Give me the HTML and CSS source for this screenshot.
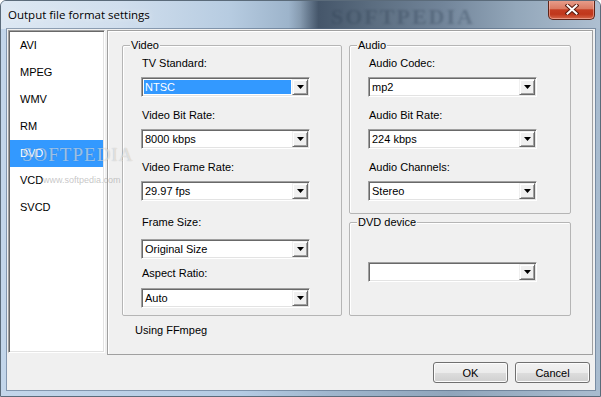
FILE: index.html
```html
<!DOCTYPE html>
<html lang="en">
<head>
    <meta charset="UTF-8">
    <meta name="viewport" content="width=device-width, initial-scale=1.0">
    <title>Output file format settings</title>
    <link rel="stylesheet" href="styles.css">
</head>
<body>
    <div class="window">
        <div class="titlebar">
            <span class="title">Output file format settings</span>
            <span class="title-mark">SOFTPEDIA</span>
            <button class="close-btn" aria-label="Close">
                <svg width="14" height="11" viewBox="0 0 14 11">
                    <path d="M2.5 1.5 L11.5 9.5 M11.5 1.5 L2.5 9.5" stroke="#5a1c10" stroke-width="4" stroke-linecap="square"/>
                    <path d="M2.5 1.5 L11.5 9.5 M11.5 1.5 L2.5 9.5" stroke="#ffffff" stroke-width="2" stroke-linecap="square"/>
                </svg>
            </button>
        </div>

        <div class="client">
            <div class="main">
                <ul class="format-list">
                    <li>AVI</li>
                    <li>MPEG</li>
                    <li>WMV</li>
                    <li>RM</li>
                    <li class="selected">DVD</li>
                    <li>VCD</li>
                    <li>SVCD</li>
                </ul>

                <div class="panel">
                    <div class="groups">
                        <div class="group group-video">
                            <span class="group-title">Video</span>
                            <div class="field">
                                <label>TV Standard:</label>
                                <div class="combo">
                                    <span class="combo-value highlighted">NTSC</span>
                                    <span class="combo-arrow"><svg width="7" height="4" viewBox="0 0 7 4"><polygon points="0,0 7,0 3.5,4" fill="#000"/></svg></span>
                                </div>
                            </div>
                            <div class="field">
                                <label>Video Bit Rate:</label>
                                <div class="combo">
                                    <span class="combo-value">8000 kbps</span>
                                    <span class="combo-arrow"><svg width="7" height="4" viewBox="0 0 7 4"><polygon points="0,0 7,0 3.5,4" fill="#000"/></svg></span>
                                </div>
                            </div>
                            <div class="field">
                                <label>Video Frame Rate:</label>
                                <div class="combo">
                                    <span class="combo-value">29.97 fps</span>
                                    <span class="combo-arrow"><svg width="7" height="4" viewBox="0 0 7 4"><polygon points="0,0 7,0 3.5,4" fill="#000"/></svg></span>
                                </div>
                            </div>
                            <div class="field field-frame">
                                <label>Frame Size:</label>
                                <div class="combo">
                                    <span class="combo-value">Original Size</span>
                                    <span class="combo-arrow"><svg width="7" height="4" viewBox="0 0 7 4"><polygon points="0,0 7,0 3.5,4" fill="#000"/></svg></span>
                                </div>
                            </div>
                            <div class="field field-aspect">
                                <label>Aspect Ratio:</label>
                                <div class="combo">
                                    <span class="combo-value">Auto</span>
                                    <span class="combo-arrow"><svg width="7" height="4" viewBox="0 0 7 4"><polygon points="0,0 7,0 3.5,4" fill="#000"/></svg></span>
                                </div>
                            </div>
                        </div>

                        <div class="side">
                            <div class="group group-audio">
                                <span class="group-title">Audio</span>
                                <div class="field">
                                    <label>Audio Codec:</label>
                                    <div class="combo">
                                        <span class="combo-value">mp2</span>
                                        <span class="combo-arrow"><svg width="7" height="4" viewBox="0 0 7 4"><polygon points="0,0 7,0 3.5,4" fill="#000"/></svg></span>
                                    </div>
                                </div>
                                <div class="field">
                                    <label>Audio Bit Rate:</label>
                                    <div class="combo">
                                        <span class="combo-value">224 kbps</span>
                                        <span class="combo-arrow"><svg width="7" height="4" viewBox="0 0 7 4"><polygon points="0,0 7,0 3.5,4" fill="#000"/></svg></span>
                                    </div>
                                </div>
                                <div class="field">
                                    <label>Audio Channels:</label>
                                    <div class="combo">
                                        <span class="combo-value">Stereo</span>
                                        <span class="combo-arrow"><svg width="7" height="4" viewBox="0 0 7 4"><polygon points="0,0 7,0 3.5,4" fill="#000"/></svg></span>
                                    </div>
                                </div>
                            </div>

                            <div class="group group-dvd">
                                <span class="group-title">DVD device</span>
                                <div class="combo">
                                    <span class="combo-value"></span>
                                    <span class="combo-arrow"><svg width="7" height="4" viewBox="0 0 7 4"><polygon points="0,0 7,0 3.5,4" fill="#000"/></svg></span>
                                </div>
                            </div>
                        </div>
                    </div>
                    <p class="status">Using FFmpeg</p>
                </div>
            </div>

            <div class="buttons">
                <button class="btn">OK</button>
                <button class="btn">Cancel</button>
            </div>

            <span class="mark-big">SOFTPEDIA</span>
            <span class="mark-url">www.softpedia.com</span>
        </div>
    </div>
</body>
</html>
```

FILE: styles.css
```css
:root {
    --face: #f0f0f0;
    --shadow: #a0a0a0;
    --dark-shadow: #696969;
    --light: #e3e3e3;
    --highlight: #3399ff;
}

body {
    margin: 0;
    font-family: "Liberation Sans", Arial, sans-serif;
    font-size: 11px;
    color: #000;
}

.window {
    width: 601px;
    height: 397px;
    box-sizing: border-box;
    border: 1px solid #5b6b7a;
    border-radius: 6px 6px 0 0;
    display: flex;
    flex-direction: column;
    overflow: hidden;
    background: linear-gradient(90deg, #c3d6ea 0%, #b4cbe3 40%, #9fb6cd 55%, #8fa5bb 75%, #a9bccf 100%);
}

.titlebar {
    height: 28px;
    display: flex;
    align-items: flex-start;
    position: relative;
    background: linear-gradient(90deg, #dde8f3 0%, #d0deed 20%, #b7cce1 38%, #9db4cb 48%, #43536555 50%, #45566a 53%, #5b6d80 62%, #72859a 74%, #93a7ba 86%, #aebfd1 100%);
}

.title {
    font-family: "Open Sans", "Noto Sans", sans-serif;
    font-size: 11.5px;
    color: #000;
    padding: 6px 0 0 7px;
    text-shadow: 0 0 6px rgba(255, 255, 255, 0.9);
}

.title-mark {
    position: absolute;
    left: 330px;
    top: 3px;
    font-family: "Liberation Serif", serif;
    font-weight: bold;
    font-size: 22px;
    letter-spacing: 2px;
    color: rgba(40, 55, 75, 0.3);
    filter: blur(1px);
}

.close-btn {
    margin: -1px 5px 0 auto;
    width: 47px;
    height: 20px;
    padding: 0;
    border: 1px solid #5e2418;
    border-top: none;
    border-radius: 0 0 5px 5px;
    background: linear-gradient(#e9a08e 0%, #db7b63 45%, #c43d22 52%, #c0371c 75%, #d5674a 100%);
    display: flex;
    align-items: center;
    justify-content: center;
    box-shadow: inset 0 0 0 1px rgba(255, 200, 190, 0.5);
}

.client {
    position: relative;
    margin: 0 5px 6px 6px;
    height: 361px;
    background: var(--face);
    box-shadow: 0 0 0 1px rgba(80, 100, 125, 0.55);
}

.main {
    display: flex;
    align-items: flex-start;
    gap: 2px;
    padding: 1px 2px 0 1px;
}

.format-list {
    list-style: none;
    margin: 0;
    padding: 0;
    width: 97px;
    height: 323px;
    box-sizing: border-box;
    background: #fff;
    border: 1px solid;
    border-color: var(--shadow) #fff #fff var(--shadow);
    box-shadow: inset 1px 1px 0 var(--dark-shadow), inset -1px -1px 0 var(--light);
    padding: 1px;
}

.format-list li {
    height: 27px;
    line-height: 27px;
    padding-left: 10px;
}

.format-list li.selected {
    background: var(--highlight);
    color: #fff;
}

.panel {
    width: 486px;
    height: 325px;
    box-sizing: border-box;
    border: 1px solid var(--shadow);
    box-shadow: inset 1px 1px 0 #fff;
    padding: 14px 0 0 14px;
}

.groups {
    display: flex;
    align-items: flex-start;
    gap: 7px;
}

.side {
    display: flex;
    flex-direction: column;
    gap: 8px;
}

.group {
    position: relative;
    border: 1px solid #b5b5b5;
    border-radius: 2px;
    box-shadow: inset 1px 1px 0 #fff;
    padding: 10px 0 0 19px;
    box-sizing: border-box;
}

.group-video {
    width: 220px;
    padding-bottom: 7px;
}

.group-audio {
    width: 222px;
    padding-bottom: 12px;
}

.group-dvd {
    width: 222px;
    padding-top: 39px;
    padding-bottom: 33px;
}

.group-title {
    position: absolute;
    top: -8px;
    left: 7px;
    padding: 0 1px;
    line-height: 14px;
    background: var(--face);
}

.field + .field {
    margin-top: 11px;
}

.field label {
    display: block;
    line-height: 14px;
    margin-bottom: 7px;
}

.group .field.field-frame {
    margin-top: 14px;
}

.field-frame label {
    margin-bottom: 10px;
}

.group .field.field-aspect {
    margin-top: 7px;
}

.field-aspect label {
    margin-bottom: 8px;
}

.combo {
    width: 169px;
    height: 20px;
    margin-left: -1px;
    box-sizing: border-box;
    display: flex;
    padding: 1px;
    background: #fff;
    border: 1px solid;
    border-color: var(--shadow) #fff #fff var(--shadow);
    box-shadow: inset 1px 1px 0 var(--dark-shadow), inset -1px -1px 0 var(--light);
}

.combo-value {
    flex: 1;
    line-height: 16px;
    padding-left: 2px;
}

.combo-value.highlighted {
    margin: 1px;
    padding-left: 1px;
    line-height: 14px;
    background: var(--highlight);
    color: #fff;
}

.combo-arrow {
    width: 16px;
    height: 16px;
    box-sizing: border-box;
    background: var(--face);
    border: 1px solid;
    border-color: var(--face) var(--dark-shadow) var(--dark-shadow) var(--face);
    box-shadow: inset 1px 1px 0 #fff, inset -1px -1px 0 var(--shadow);
    display: flex;
    align-items: center;
    justify-content: center;
}

.combo-arrow svg {
    display: block;
    margin-left: 1px;
}

.status {
    margin: 7px 0 0 13px;
    line-height: 14px;
}

.buttons {
    display: flex;
    justify-content: flex-end;
    gap: 7px;
    padding: 7px 5px 0 0;
}

.btn {
    width: 75px;
    height: 21px;
    padding: 0;
    font-family: "Liberation Sans", Arial, sans-serif;
    font-size: 11px;
    color: #000;
    border: 1px solid #707070;
    border-radius: 3px;
    background: linear-gradient(#f2f2f2 0%, #ebebeb 50%, #dddddd 51%, #cfcfcf 100%);
    box-shadow: inset 0 0 0 1px #fcfcfc;
}

.mark-big {
    position: absolute;
    left: 15px;
    top: 115px;
    font-family: "Liberation Serif", serif;
    font-size: 19px;
    letter-spacing: 1px;
    color: rgba(255, 255, 255, 0.55);
    text-shadow: 0 0 1px rgba(0, 0, 0, 0.25);
    pointer-events: none;
}

.mark-url {
    position: absolute;
    left: 36px;
    top: 146px;
    font-size: 9px;
    color: rgba(160, 160, 160, 0.6);
    pointer-events: none;
}
```
